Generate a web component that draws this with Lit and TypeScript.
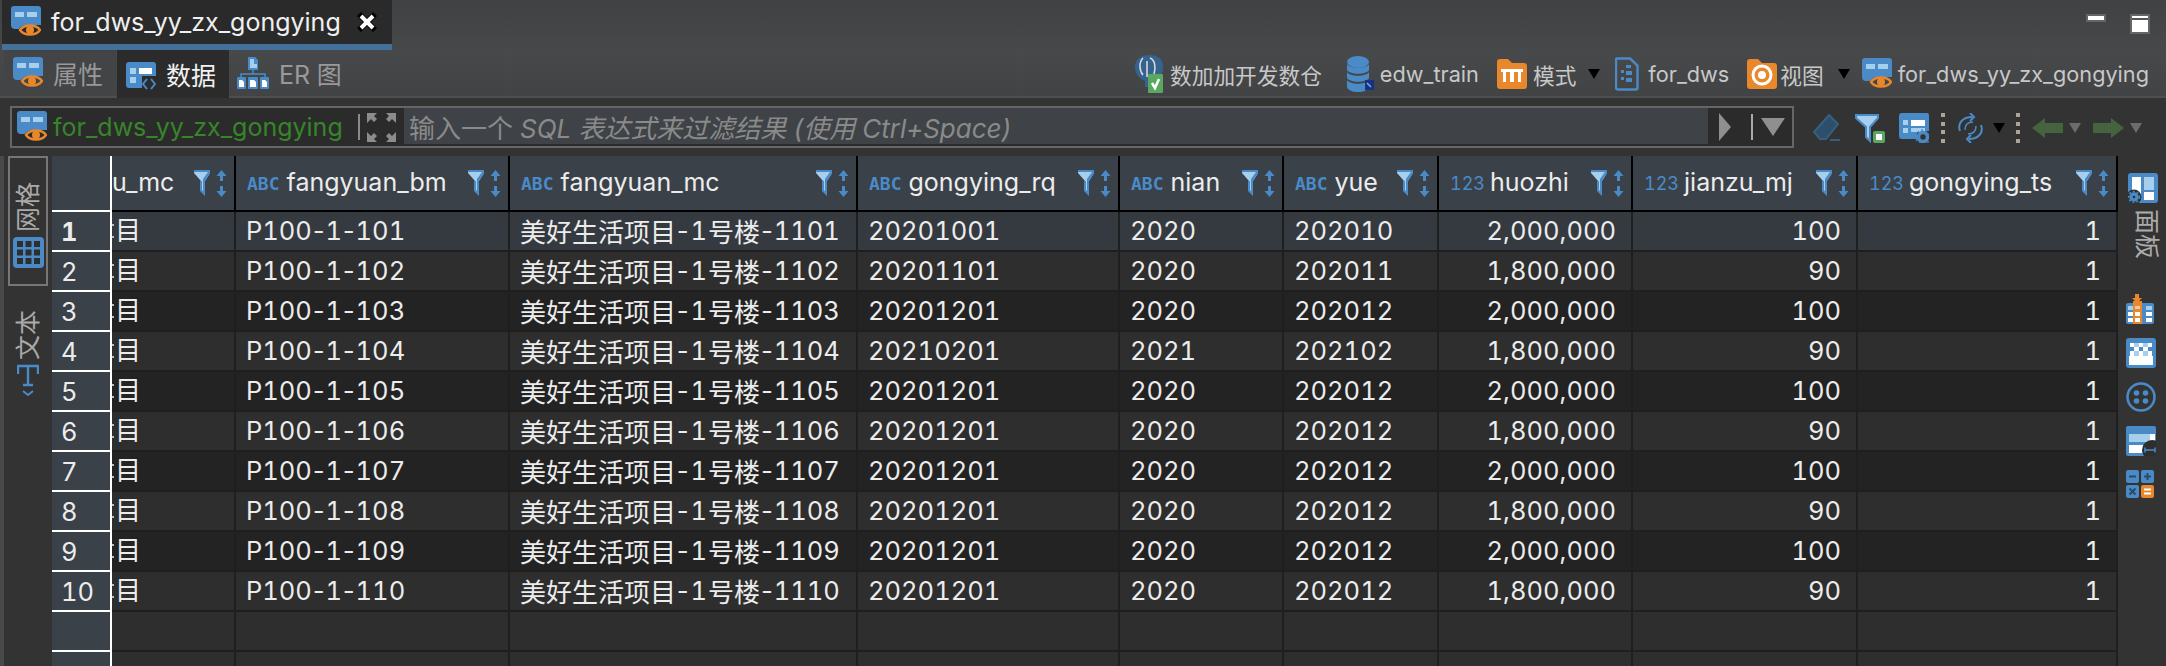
import { LitElement, html, css, svg } from "lit";
import { customElement } from "lit/decorators.js";

const B = "#4a8bc7", L = "#a6cfec", O = "#e8872c";
const icon = (w: number, h: number, body: unknown, cls = "") =>
  html`<svg class="ic ${cls}" width=${w} height=${h} viewBox="0 0 ${w} ${h}">${body}</svg>`;

const viewIcon = () => icon(30, 32, svg`
  <path fill=${B} d="M3 0h24a3 3 0 0 1 3 3v16H16c-4 0-7 2-8 4H4a4 4 0 0 1-4-4V3a3 3 0 0 1 3-3z"/>
  <rect x="4" y="6" width="9" height="5" fill=${L}/><rect x="16" y="6" width="10" height="5" fill=${L}/>
  <path fill="none" stroke=${O} stroke-width="2.4" d="M9 24c4-6 16-6 20 0c-4 6-16 6-20 0z"/><circle cx="19" cy="24" r="4" fill=${O}/>`);
const dataIcon = () => icon(30, 28, svg`
  <path fill=${B} d="M3 0h24a3 3 0 0 1 3 3v11H16v12H3a3 3 0 0 1-3-3V3a3 3 0 0 1 3-3z"/>
  <rect x="13" y="6" width="13" height="6" fill="#fff"/><rect x="4" y="6" width="6" height="6" fill=${L}/><rect x="4" y="15" width="6" height="6" fill=${L}/>
  <path fill="none" stroke=${B} stroke-width="2" d="M21 17l-4 5l4 5M25 17l4 5l-4 5"/>`);
const erIcon = () => icon(32, 32, svg`
  <path fill=${B} d="M11 0h7l3 3v10H11z"/><path fill=${L} d="M13 2h4v5h3v4h-7z"/>
  <path fill="none" stroke=${B} stroke-width="1.5" d="M16 13v4M4 20v-3h24v3"/>
  <rect y="20" width="9" height="12" rx="1" fill=${B}/><rect x="11" y="20" width="10" height="12" rx="1" fill=${B}/><rect x="23" y="20" width="9" height="12" rx="1" fill=${B}/>
  <path fill="#fff" d="M2 23h3l2 2v5H2zM13 23h4l2 2v5h-6zM25 23h3l2 2v5h-5z"/>`);
const funnel = () => icon(17, 26, svg`
  <path fill=${L} d="M0 0h16v3l-5 8v13l-4-4V11L0 3z"/><path fill=${B} d="M16 0v3l-5 8v15l-5-5V11h2v9l1 1V9l5-7H0V0z"/>`);
const sort = () => icon(11, 27, svg`
  <path fill=${B} d="M5.500 0l5 6H7v5H4V6H.5zM4 16h3v5h3.500l-5 6l-5-6H4z"/>`);
const tri = (c = "#000", cls = "") => icon(12, 10, svg`<path fill=${c} d="M0 0h12L6 10z"/>`, cls);
const pgIcon = () => icon(30, 38, svg`
  <path fill="#34638f" d="M15 0c9 0 15 4 14 13c0 6-3 10-8 11v8H11v-6C5 24 1 18 1 12C1 4 7 0 15 0z"/>
  <path fill="none" stroke="#d8d8d8" stroke-width="1.6" d="M9 3C5 7 5 15 9 20M16 3c5 2 6 9 4 16M13 6v16"/>
  <rect x="14" y="19" width="15" height="19" rx="1" fill="#5aa860"/><path fill="none" stroke="#fff" stroke-width="2.500" d="M18 28l3 5l4-9"/>`);
const dbIcon = () => icon(27, 36, svg`
  <ellipse cx="11" cy="6" rx="11" ry="6" fill=${B}/><path fill=${B} d="M0 8c3 5 19 5 22 0v6c-3 5-19 5-22 0zM0 16c3 5 19 5 22 0v6c-3 5-19 5-22 0zM0 24c3 5 19 5 22 0v6c0 8-22 8-22 0z"/>
  <rect x="18" y="24" width="9" height="10" fill="#17337f"/><path stroke="#7fb0ff" stroke-width="1.500" d="M20 27l4 4"/>`);
const folderIcon = (inner: unknown) => icon(30, 30, svg`
  <path fill=${O} d="M3 0h8l4 4h12a3 3 0 0 1 3 3v20a3 3 0 0 1-3 3H3a3 3 0 0 1-3-3V3a3 3 0 0 1 3-3z"/>${inner}`);
const schemaIcon = () => folderIcon(svg`<path fill="#fff" d="M4 10h22v3h-2v10h-3V13h-4v10h-4V13H9v10H6V13H4z"/>`);
const viewFolder = () => folderIcon(svg`<circle cx="15" cy="16" r="9" fill="none" stroke="#fff" stroke-width="3"/><circle cx="15" cy="16" r="4" fill="#fff"/>`);
const docIcon = () => icon(24, 34, svg`
  <path fill="none" stroke=${B} stroke-width="2.400" d="M2 1.500h13l7.500 7v22a2 2 0 0 1-2 2H3a2 2 0 0 1-2-2V2z"/>
  <path fill=${B} d="M11 8h5v3h-5zM6 13h3v3H6zM11 14h6v4h-6zM6 20h3v3H6zM11 21h6v4h-6z"/>`);
const eraser = () => icon(28, 28, svg`
  <path fill="#2e4f6c" stroke="#36607f" stroke-width="2" d="M17 1l9 9l-12 15H8l-6-7z"/><rect x="18" y="25" width="10" height="2" fill="#36607f"/>`);
const funnelSave = () => icon(31, 29, svg`
  <path fill=${L} stroke=${B} stroke-width="2" d="M1 1h22v3l-8 9v14l-4-4V13L1 4z"/>
  <rect x="18" y="17" width="12" height="12" rx="2" fill="#5aa860"/><rect x="21" y="20" width="6" height="6" fill="#fff"/>`);
const tableGear = () => icon(30, 30, svg`
  <path fill=${B} d="M3 0h25a2 2 0 0 1 2 2v16H18v8H3a3 3 0 0 1-3-3V3a3 3 0 0 1 3-3z"/>
  <rect x="12" y="7" width="14" height="6" fill="#fff"/><rect x="4" y="7" width="5" height="5" fill=${L}/><rect x="4" y="15" width="5" height="5" fill=${L}/><rect x="12" y="15" width="14" height="4" fill=${L}/>
  <circle cx="24" cy="24" r="4.500" fill="none" stroke=${B} stroke-width="3.500"/><circle cx="24" cy="24" r="7" fill="none" stroke=${B} stroke-width="1.600" stroke-dasharray="2 2.400"/>`);
const sync = () => icon(27, 30, svg`
  <path fill="none" stroke=${B} stroke-width="2" d="M3 18C0 10 6 4 15 4M24 12c3 8-3 14-12 14"/>
  <path fill="none" stroke=${B} stroke-width="2" d="M13 0l4 4l-4 4M14 22l-4 4l4 4"/>
  <path fill="none" stroke=${B} stroke-width="1.500" d="M8 17c0-5 3-8 8-8M19 13c0 5-3 8-8 8"/>`);
const dots = () => html`<span class="dots"><i></i><i></i><i></i><i></i></span>`;
const arrowL = () => icon(31, 20, svg`<path fill="#46633f" d="M0 10L13 0v5h18v10H13v5z"/>`);
const arrowR = () => icon(31, 20, svg`<path fill="#46633f" d="M31 10L18 0v5H0v10h18v5z"/>`);
const expand = () => icon(29, 29, svg`
  <path fill="#8c8c8c" d="M0 0h10L7 3l3 3l-3 3l-3-3l-4 4zM29 0H19l3 3l-3 3l3 3l3-3l4 4zM0 29h10l-3-3l3-3l-3-3l-3 3l-4-4zM29 29H19l3-3l-3-3l3-3l3 3l4-4z"/>`);
const gridIcon = () => icon(31, 31, svg`
  <rect width="31" height="31" rx="4" fill=${B}/>
  <path fill="#2e2e2e" d="M4 4h6v6H4zM12.500 4h6v6h-6zM21 4h6v6h-6zM4 12.500h6v6H4zM12.500 12.500h6v6h-6zM21 12.500h6v6h-6zM4 21h6v6H4zM12.500 21h6v6h-6zM21 21h6v6h-6z"/>`);
const textIcon = () => icon(22, 32, svg`
  <path fill="none" stroke=${B} stroke-width="2.400" d="M1 10V2h20v8M11 2v18M6 21h10"/>
  <path fill="none" stroke=${B} stroke-width="2" d="M6 27l5 4l5-4"/>`);
const panelIcon = () => icon(30, 30, svg`
  <rect width="30" height="30" rx="3" fill=${B}/><rect x="4" y="4" width="9" height="21" fill="#fff"/><rect x="16" y="4" width="10" height="13" fill=${L}/><rect x="16" y="19" width="10" height="8" fill="#fff"/>
  <circle cx="6" cy="24" r="7.500" fill="#2e2e2e"/><circle cx="6" cy="24" r="3" fill="none" stroke=${B} stroke-width="3.500"/><circle cx="6" cy="24" r="5.500" fill="none" stroke=${B} stroke-width="1.500" stroke-dasharray="2 2"/>`);
const colsIcon = () => icon(28, 30, svg`
  <path fill=${O} d="M9 0h4v4h3l-5 5l-5-5h3z"/><rect y="9" width="28" height="21" rx="2" fill=${B}/>
  <path fill=${L} d="M2 12h6v4H2zM20 12h6v4h-6z"/><path fill="#fff" d="M2 18h6v4H2zM2 24h6v4H2zM20 18h6v4h-6zM20 24h6v4h-6z"/>
  <rect x="7" y="7" width="9" height="23" fill=${O}/><path fill="#f1c9a4" d="M9 12h5v3H9z"/><path fill="#fff" d="M9 18h5v4H9zM9 24h5v4H9z"/>`);
const valuesIcon = () => icon(30, 30, svg`
  <rect width="30" height="30" rx="3" fill=${B}/><rect x="3" y="18" width="24" height="9" fill="#fff"/>
  <path fill="#fff" d="M4 5h4v4H4zM13 5h4v4h-4zM22 5h4v4h-4zM8 9h5v4H8zM17 9h5v4h-5zM4 13h4v5H4zM13 13h4v5h-4zM22 13h4v5h-4z"/><path fill=${L} d="M8 13h5v5H8zM17 13h5v5h-5zM8 5h5v4H8zM17 5h5v4h-5z"/>`);
const circleIcon = () => icon(30, 30, svg`
  <circle cx="15" cy="15" r="13.500" fill="none" stroke=${B} stroke-width="2.500"/><circle cx="10.500" cy="11" r="2.800" fill=${B}/><circle cx="19.500" cy="11" r="2.800" fill=${B}/><circle cx="10.500" cy="19" r="2.800" fill=${B}/><circle cx="19.500" cy="19" r="2.800" fill=${B}/>`);
const widthIcon = () => icon(30, 30, svg`
  <rect width="30" height="30" rx="2" fill=${B}/><rect x="3" y="8" width="21" height="8" fill=${L}/><rect x="24" y="8" width="5" height="8" fill="#fff"/><rect x="3" y="19" width="14" height="8" fill="#fff"/>
  <circle cx="26" cy="24" r="10" fill="#2e2e2e"/><path stroke=${B} stroke-width="1.500" fill="none" d="M19 24h10M19 21.500v5M29 21.500v5"/>`);
const calcIcon = () => icon(28, 28, svg`
  <rect width="13" height="13" rx="2" fill=${B}/><rect x="15" width="13" height="13" rx="2" fill=${B}/><rect y="15" width="13" height="13" rx="2" fill=${B}/><rect x="15" y="15" width="13" height="13" rx="2" fill=${O}/>
  <path stroke="#2a4a66" stroke-width="2" d="M3 6.500h7M18 6.500h7M21.500 3v7M3.500 18.500l6 6M9.500 18.500l-6 6"/><path stroke="#fff" stroke-width="2" d="M18 19.500h7M18 23.500h7"/>`);

const dates = ["20201001", "20201101", "20201201", "20210201", "20201201", "20201201", "20201201", "20201201", "20201201", "20201201"];
const rows = dates.map((rq, i) => ({
  n: i + 1,
  suffix: String(i + 1).padStart(2, "0"),
  rq,
  nian: rq.slice(0, 4),
  yue: rq.slice(0, 6),
  hz: i % 2 ? "1,800,000" : "2,000,000",
  mj: i % 2 ? "90" : "100",
}));
const headers: [string, string][] = [
  ["", "u_mc"],
  ["ABC", "fangyuan_bm"],
  ["ABC", "fangyuan_mc"],
  ["ABC", "gongying_rq"],
  ["ABC", "nian"],
  ["ABC", "yue"],
  ["123", "huozhi"],
  ["123", "jianzu_mj"],
  ["123", "gongying_ts"],
];

@customElement("app-root")
export class AppRoot extends LitElement {
  static styles = css`
    :host { display: block; width: 2166px; height: 666px; overflow: hidden; background: #333; color: #eee;
      font-family: Inter, "Noto Sans CJK SC", sans-serif; font-size: 25px; font-variant-numeric: tabular-nums; }
    * { box-sizing: border-box; }
    .ic { display: block; flex: none; }
    .top { height: 48px; display: flex; background: linear-gradient(#404143, #47484a); padding-left: 2px; }
    .tab { width: 390px; height: 50px; background: #2a2a2b; border-bottom: 6px solid #44709c; display: flex; align-items: center; padding-left: 9px; gap: 10px; font-size: 25px; color: #f0f0f0; position: relative; z-index: 1; }
    .close { margin-left: 6px; width: 20px; height: 20px; flex: none; }
    .winbtns { margin-left: auto; display: flex; gap: 24px; padding: 14px 16px 0 0; align-items: flex-start; }
    .win-min { width: 20px; height: 8px; border: 2px solid #666; background: #fff; }
    .win-max { width: 20px; height: 20px; border: 2px solid #666; background: linear-gradient(#fff 2px, #555 2px, #555 4px, #fff 4px); }
    .tools { height: 50px; display: flex; align-items: flex-end; background: linear-gradient(#48494b, #424345); padding-left: 4px; border-bottom: 2px solid #4d4e50; }
    .sub { height: 46px; width: 112px; display: flex; align-items: center; gap: 10px; padding-left: 9px; color: #999; font-size: 25px; background: #434446; }
    .sub.on { background: #2b2b2b; color: #f2f2f2; height: 48px; margin: 0 2px -2px 1px; gap: 10px; }
    .sub.on .ic { margin-top: 4px; }
    .sub.er { background: none; padding-left: 6px; }
    .crumbs { margin-left: auto; height: 48px; padding-top: 4px; display: flex; align-items: center; font-size: 21.7px; color: #c8c8c8; padding-right: 17px; }
    .crumbs .ic { margin-right: 6px; }
    .crumbs span { margin-right: 25px; }
    .crumbs span.e { margin-right: 18px; }
    .crumbs span.fd { margin-left: 3px; margin-right: 18px; }
    .crumbs span.last { margin-right: 0; }
    .crumbs span.m { margin-right: 12px; }
    .crumbs span.v { margin-left: -3px; margin-right: 14px; }
    .crumbs .dd { margin-right: 9px; }
    .crumbs .dd.k { margin-right: 6px; }
    .filter { height: 58px; display: flex; padding: 8px 0 8px 10px; background: #333; }
    .fbox { width: 1784px; flex: none; border: 2px solid #666; display: flex; background: #2b2b2b; }
    .fsrc { width: 392px; flex: none; display: flex; align-items: center; padding-left: 5px; gap: 6px; color: #37852a; font-size: 25px; }
    .sep { width: 2px; height: 26px; background: #8a8a8a; flex: none; margin-left: 9px; }
    .fsrc .sep + .ic { margin-left: 1px; }
    .finput { flex: 1; background: #3f4347; margin-bottom: 2px; color: #8a8a8a; display: flex; align-items: center; padding-left: 5px; white-space: pre; font-size: 26px; }
    .finput em { font-style: italic; }
    .fend { width: 84px; flex: none; display: flex; align-items: center; padding-left: 11px; }
    .fend .sep { margin: 0 8px 0 20px; background: #aaa; }
    .fend .play { width: 0; height: 0; border-style: solid; border-width: 14px 0 14px 12px; border-color: transparent transparent transparent #8f8f8f; }
    .ftools { display: flex; align-items: center; padding-left: 18px; height: 30px; margin-top: 7px; }
    .dots { display: flex; flex-direction: column; justify-content: space-between; width: 4px; height: 30px; flex: none; }
    .dots i { display: block; height: 4px; background: #aaa597; }
    .g15 { margin-left: 15px; } .g13 { margin-left: 13px; } .g12 { margin-left: 12px; } .g9 { margin-left: 9px; } .g11 { margin-left: 11px; } .g6 { margin-left: 6px; }
    .main { display: flex; height: 510px; }
    .left { width: 52px; flex: none; border-left: 4px solid #48494b; padding-left: 4px; color: #aaa; }
    .vtab { width: 40px; display: flex; flex-direction: column; align-items: center; }
    .vtab.on { height: 130px; border: 2px solid #777; padding-top: 24px; gap: 5px; }
    .vtab.off { padding-top: 24px; gap: 4px; }
    .vt { writing-mode: vertical-rl; text-orientation: sideways; transform: rotate(180deg); font-size: 25px; line-height: 30px; }
    .grid { width: 2066px; flex: none; overflow: hidden; }
    .row { display: grid; grid-template-columns: 60px 124px 274px 348px 262px 164px 155px 194px 225px 260px; height: 40px; }
    .head { height: 56px; }
    .cell { border-right: 2px solid #1f1f1f; border-bottom: 2px solid #1f1f1f; display: flex; align-items: center; padding: 0 10px; overflow: hidden; white-space: nowrap; color: #ececec; background: #2e2e2e; font-size: 25.5px; padding-bottom: 2px; }
    .alt .cell { background: #232323; }
    .sel .cell { background: #353a40; }
    .cell.r { justify-content: flex-end; padding-right: 15px; }
    .cell.n { background: #3a4149; border-right-color: #fff; border-bottom-color: #fff; padding: 0 0 0 9px; }
    .sel .cell.n { background: #5c5a68; font-weight: 700; }
    .alt .cell.n { background: #3a4149; }
    .cell.clip { padding: 0; }
    .stub { width: 2px; height: 14px; margin-right: 1px; background: repeating-linear-gradient(#bbb 0 2px, transparent 2px 12px); flex: none; }
    .mu { margin-top: -6px; font-size: 26px; }
    .zh { font-size: 26px; }
    .one { margin: 0 1px; }
    .h { margin: 0 -1.5px; }
    .head .cell { background: #3a4149; border-right-color: #000; border-bottom: 2px solid #000; padding: 0 7px 0 11px; font-size: 25px; }
    .head .cell.n { border-right-color: #fff; border-bottom-color: #fff; }
    .head .cell.first { padding-left: 0; }
    .ty { color: #4a8bc7; font-size: 18px; margin-right: 7px; }
    .ty.abc { font-family: "DejaVu Sans Mono", monospace; font-weight: 700; }
    .ty.num { margin-right: 5px; }
    .hname { flex: 1; margin-top: -2px; }
    .hic { display: flex; gap: 5px; }
    .right { flex: 1; display: flex; flex-direction: column; align-items: flex-start; padding: 17px 0 0 8px; color: #aaa; }
    .rtxt { writing-mode: vertical-rl; text-orientation: sideways; font-size: 25px; line-height: 30px; margin: 6px 0 35px 6px; }
    .right .ic { margin-bottom: 14px; }
    .right .ic:first-child { margin: 0 0 0 2px; }
  `;

  render() {
    return html`
      <div class="top">
        <div class="tab">${viewIcon()}<span>for_dws_yy_zx_gongying</span>
          <svg class="close" viewBox="0 0 20 20"><path fill="#000" d="M0 4l4-4l6 6l6-6l4 4l-6 6l6 6l-4 4l-6-6l-6 6l-4-4l6-6z"/><path stroke="#fff" stroke-width="4" d="M4 4l12 12M16 4L4 16"/></svg>
        </div>
        <div class="winbtns"><div class="win-min"></div><div class="win-max"></div></div>
      </div>
      <div class="tools">
        <div class="sub">${viewIcon()}<span>属性</span></div>
        <div class="sub on">${dataIcon()}<span>数据</span></div>
        <div class="sub er">${erIcon()}<span>ER 图</span></div>
        <div class="crumbs">
          ${pgIcon()}<span>数加加开发数仓</span>
          ${dbIcon()}<span class="e">edw_train</span>
          ${schemaIcon()}<span class="m">模式</span><div class="dd">${tri()}</div>
          ${docIcon()}<span class="fd">for_dws</span>
          ${viewFolder()}<span class="v">视图</span><div class="dd k">${tri()}</div>
          ${viewIcon()}<span class="last">for_dws_yy_zx_gongying</span>
        </div>
      </div>
      <div class="filter">
        <div class="fbox">
          <div class="fsrc">${viewIcon()}<span>for_dws_yy_zx_gongying</span><div class="sep"></div>${expand()}</div>
          <div class="finput">输入一个 <em>SQL 表达式来过滤结果 (使用 Ctrl+Space)</em></div>
          <div class="fend"><div class="play"></div><div class="sep"></div>${icon(24, 18, svg`<path fill="#8f8f8f" d="M0 0h24L12 18z"/>`)}</div>
        </div>
        <div class="ftools">
          ${eraser()}<div class="g15">${funnelSave()}</div><div class="g13">${tableGear()}</div>
          <div class="g12">${dots()}</div><div class="g12">${sync()}</div><div class="g9">${tri()}</div>
          <div class="g11">${dots()}</div><div class="g12">${arrowL()}</div><div class="g6">${tri("#6c6c6c")}</div>
          <div class="g12">${arrowR()}</div><div class="g6">${tri("#6c6c6c")}</div>
        </div>
      </div>
      <div class="main">
        <div class="left">
          <div class="vtab on"><span class="vt">网格</span>${gridIcon()}</div>
          <div class="vtab off"><span class="vt">文本</span>${textIcon()}</div>
        </div>
        <div class="grid">
          <div class="row head">
            <div class="cell n"></div>
            ${headers.map(([t, n]) => html`<div class="cell ${t ? "" : "first"}">
              ${t ? html`<span class="ty ${t === "ABC" ? "abc" : "num"}">${t}</span>` : ""}
              <span class="hname">${n}</span><div class="hic">${funnel()}${sort()}</div></div>`)}
          </div>
          ${rows.map((r, i) => html`<div class="row ${i === 0 ? "sel" : ""} ${i % 2 === 0 ? "alt" : ""}">
            <div class="cell n">${r.n}</div>
            <div class="cell clip"><i class="stub"></i><span class="mu">目</span></div>
            <div class="cell">P100<span class="h">-</span>1<span class="h">-</span>1${r.suffix}</div>
            <div class="cell"><span class="zh">美好生活项目</span><span class="h">-</span><span class="one">1</span><span class="zh">号楼</span><span class="h">-</span>11${r.suffix}</div>
            <div class="cell">${r.rq}</div>
            <div class="cell">${r.nian}</div>
            <div class="cell">${r.yue}</div>
            <div class="cell r">${r.hz}</div>
            <div class="cell r">${r.mj}</div>
            <div class="cell r">1</div>
          </div>`)}
          ${[0, 1].map(() => html`<div class="row">${Array.from({ length: 10 }, (_, j) => html`<div class="cell ${j === 0 ? "n" : ""}"></div>`)}</div>`)}
        </div>
        <div class="right">
          ${panelIcon()}<span class="rtxt">面板</span>
          ${colsIcon()}${valuesIcon()}${circleIcon()}${widthIcon()}${calcIcon()}
        </div>
      </div>
    `;
  }
}
